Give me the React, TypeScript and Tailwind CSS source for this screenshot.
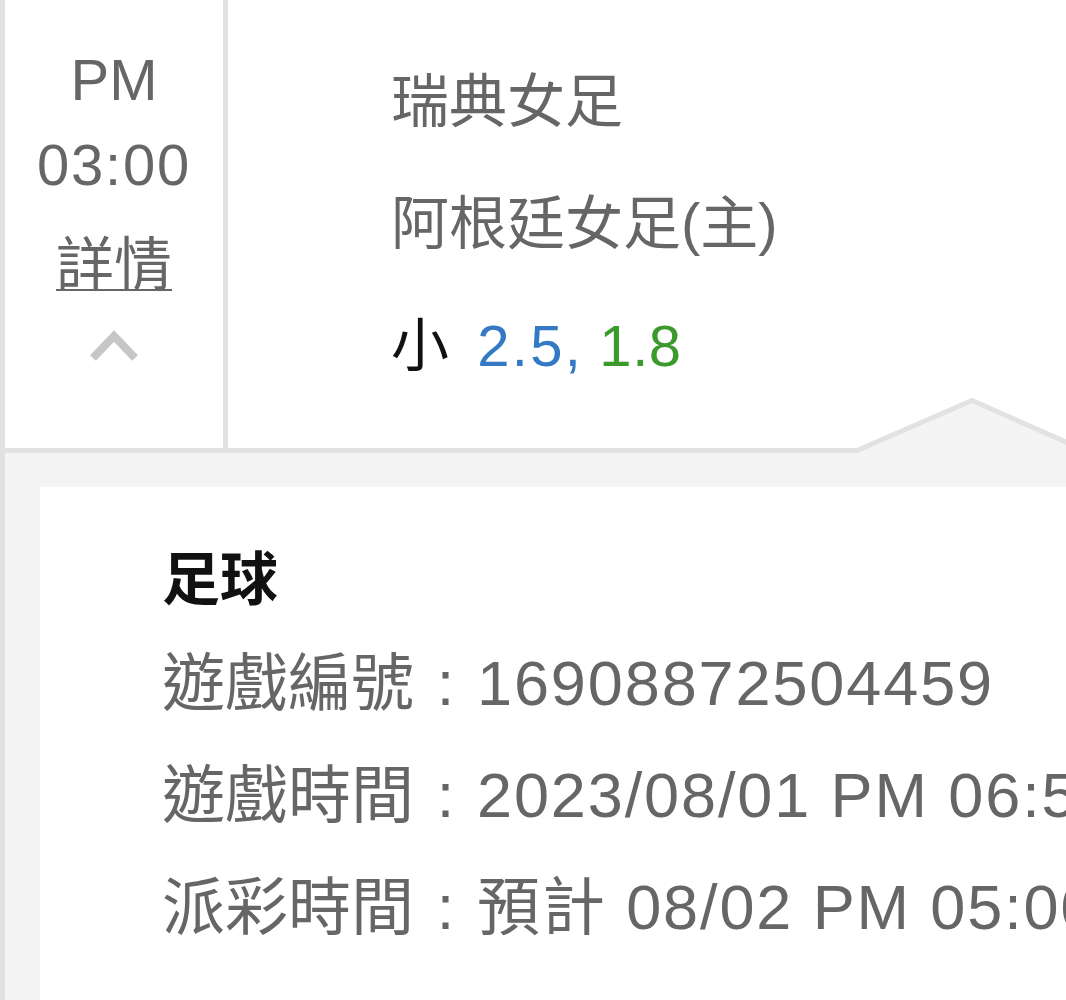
import React from "react";

const DETAILS = [
  { label: "遊戲編號", value: "16908872504459" },
  { label: "遊戲時間", value: "2023/08/01 PM 06:55" },
  { label: "派彩時間", value: "預計 08/02 PM 05:00" },
];

export default function App() {
  return (
    <div className="relative w-[1066px] h-[1000px] overflow-hidden bg-white border-l-[5px] border-[#e2e2e2] font-['Liberation_Sans','Noto_Sans_CJK_TC',sans-serif] text-[#666666]">
      {/* Match row */}
      <div className="flex h-[453px] border-b-[5px] border-[#e2e2e2]">
        <div className="w-[223px] shrink-0 border-r-[5px] border-[#e2e2e2] flex flex-col items-center pt-[37px] text-[58px] leading-[85px]">
          <div>PM</div>
          <div className="tracking-[0.03em]">03:00</div>
          <div className="mt-[15px] underline decoration-2 underline-offset-4">詳情</div>
          <svg width="48" height="32" viewBox="0 0 48 32" className="mt-[23px]">
            <polyline points="3,28 24,6 45,28" fill="none" stroke="#c6c6c6" strokeWidth="8" />
          </svg>
        </div>
        <div className="flex-1 pl-[163px] pt-[41px] text-[58px] leading-[122px] whitespace-nowrap">
          <div>瑞典女足</div>
          <div>阿根廷女足(主)</div>
          <div>
            <span className="text-[#111111]">小</span>{" "}
            <span className="ml-[12px] tracking-[0.04em] text-[#3479c4]">2.5,</span>{" "}
            <span className="tracking-[0.01em] text-[#3a9a2b]">1.8</span>
          </div>
        </div>
      </div>

      {/* Up caret of the expanded panel */}
      <svg width="240" height="64" viewBox="0 0 240 64" className="absolute left-[847px] top-[395px]">
        <polygon points="5,55.5 120,5.5 233,55.5 233,58.5 5,58.5" fill="#f4f4f4" />
        <polyline points="0,55.5 5,55.5 120,5.5 233,55.5 240,55.5" fill="none" stroke="#e2e2e2" strokeWidth="5" />
      </svg>

      {/* Expanded detail panel */}
      <div className="bg-[#f4f4f4] pl-[35px] pt-[34px] h-[547px]">
        <div className="bg-white h-full pl-[122px] pt-[46px] whitespace-nowrap">
          <div className="text-[58px] leading-[94px] font-bold text-[#111111]">足球</div>
          {DETAILS.map((d) => (
            <div key={d.label} className="text-[63px] leading-[112px]">
              {d.label}
              <span className="inline-block w-[1em] text-center">:</span>
              <span className="tracking-[0.03em]">{d.value}</span>
            </div>
          ))}
        </div>
      </div>
    </div>
  );
}
